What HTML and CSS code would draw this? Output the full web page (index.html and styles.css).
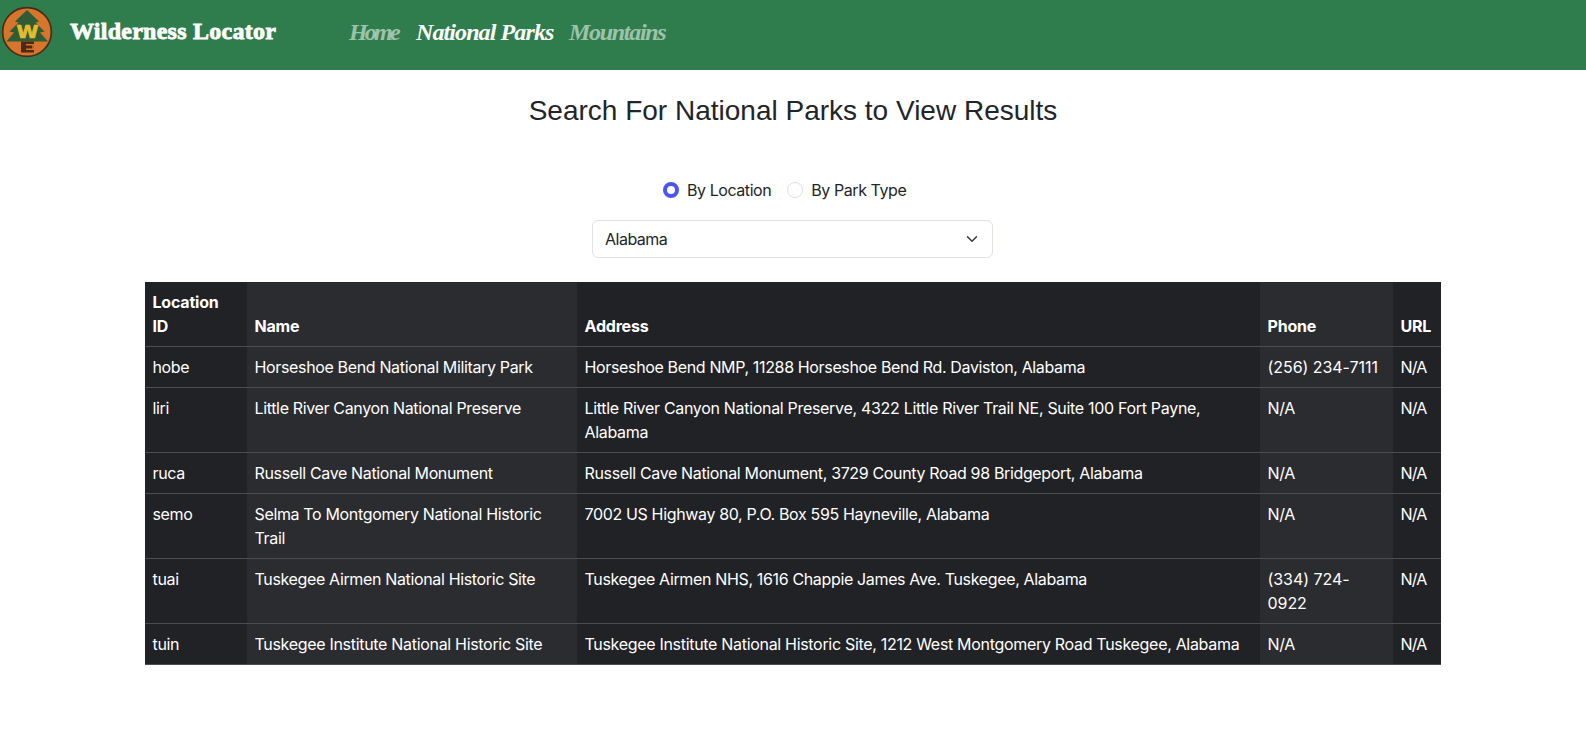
FILE: index.html
```html
<!DOCTYPE html>
<html lang="en">
<head>
<meta charset="utf-8">
<title>Wilderness Locator</title>
<link rel="stylesheet" href="styles.css">
</head>
<body>
<nav class="navbar">
  <svg class="logo" viewBox="0 0 52 52" width="52" height="52">
    <circle cx="26" cy="26" r="24.4" fill="#d5762c" stroke="#4b2a17" stroke-width="1.7"/>
    <path d="M26 4 L38 15.500 L34.500 16.500 L43.500 25.500 L39 26.500 L47 35.500 H5.500 L13 26.500 L8.500 25.500 L17.500 16.500 L14 15.500Z" fill="#2f5b35"/>
    <text class="logo-w" x="15.500" y="32" textLength="22" lengthAdjust="spacingAndGlyphs">W</text>
    <rect x="20" y="35.500" width="13" height="11" fill="#4b2a17"/>
    <path d="M25 38.800h8M25 43.200h8M32 38v6" stroke="#d5762c" stroke-width="1.5"/>
  </svg>
  <a class="brand"><span>Wilderness Locator</span></a>
  <div class="links">
    <a class="home">Home</a>
    <a class="parks active">National Parks</a>
    <a class="mountains">Mountains</a>
  </div>
</nav>
<main>
  <h1>Search For National Parks to View Results</h1>
  <form class="search">
    <div class="choices">
      <label><span class="radio checked"></span>By Location</label>
      <label><span class="radio"></span>By Park Type</label>
    </div>
    <div class="select">
      <span>Alabama</span>
      <svg width="16" height="12" viewBox="0 0 16 16"><path d="m2 5 6 6 6-6" fill="none" stroke="#343a40" stroke-width="2" stroke-linecap="round" stroke-linejoin="round"/></svg>
    </div>
  </form>
  <table>
    <colgroup><col class="c-id"><col class="c-name"><col class="c-address"><col class="c-phone"><col class="c-url"></colgroup>
    <thead><tr><th>Location<br>ID</th><th>Name</th><th>Address</th><th>Phone</th><th>URL</th></tr></thead>
    <tbody>
      <tr><td>hobe</td><td>Horseshoe Bend National Military Park</td><td>Horseshoe Bend NMP, 11288 Horseshoe Bend Rd. Daviston, Alabama</td><td class="tel">(256) 234-7111</td><td>N/A</td></tr>
      <tr><td>liri</td><td>Little River Canyon National Preserve</td><td class="long">Little River Canyon National Preserve, 4322 Little River Trail NE, Suite 100 Fort Payne,<br>Alabama</td><td>N/A</td><td>N/A</td></tr>
      <tr><td>ruca</td><td>Russell Cave National Monument</td><td>Russell Cave National Monument, 3729 County Road 98 Bridgeport, Alabama</td><td>N/A</td><td>N/A</td></tr>
      <tr><td>semo</td><td>Selma To Montgomery National Historic<br>Trail</td><td>7002 US Highway 80, P.O. Box 595 Hayneville, Alabama</td><td>N/A</td><td>N/A</td></tr>
      <tr><td>tuai</td><td>Tuskegee Airmen National Historic Site</td><td>Tuskegee Airmen NHS, 1616 Chappie James Ave. Tuskegee, Alabama</td><td class="tel">(334) 724-<br>0922</td><td>N/A</td></tr>
      <tr><td>tuin</td><td class="long">Tuskegee Institute National Historic Site</td><td class="long">Tuskegee Institute National Historic Site, 1212 West Montgomery Road Tuskegee, Alabama</td><td>N/A</td><td>N/A</td></tr>
    </tbody>
  </table>
</main>
</body>
</html>
```
FILE: styles.css
```css
* { box-sizing: border-box; }
body {
  margin: 0;
  background: #fff;
  color: #212529;
  font: 16px/24px Inter, "Liberation Sans", sans-serif;
  letter-spacing: -0.35px;
}
.navbar {
  display: flex;
  height: 70px;
  padding: 6px 0 0 1px;
  background: #2f7d4d;
  color: #fff;
}
.logo { flex: none; }
.logo-w { font: bold 17px "DejaVu Sans", sans-serif; fill: #e3bb2e; stroke: #e3bb2e; stroke-width: 0.7px; letter-spacing: 0; }
.brand {
  width: 279px;
  margin: 7px 0 0 17px;
  font: bold 24px/36px "Liberation Serif", serif;
  letter-spacing: 0.25px;
  -webkit-text-stroke: 0.8px #fff;
  white-space: nowrap;
}
.links {
  display: flex;
  padding-top: 8px;
  font: italic bold 24px/36px "Liberation Serif", serif;
  color: rgba(255, 255, 255, 0.55);
  white-space: nowrap;
}
.home { width: 67px; letter-spacing: -2.8px; }
.parks { width: 153px; letter-spacing: -0.9px; }
.mountains { letter-spacing: -1.3px; }
.active { color: #fff; }
main { display: flex; flex-direction: column; align-items: center; }
h1 {
  margin: 24px 0 0;
  font: 28px/34px "Liberation Sans", Arial, sans-serif;
  letter-spacing: 0;
}
.search { width: 401px; margin: 50px 1px 0 0; }
.choices { display: flex; gap: 16px; padding-left: 71px; }
.choices label { display: flex; align-items: center; letter-spacing: -0.43px; white-space: nowrap; }
.radio {
  flex: none;
  width: 16px;
  height: 16px;
  margin-right: 8px;
  border: 1px solid #dee2e6;
  border-radius: 50%;
  background: #fff;
}
.radio.checked { border: 4.5px solid #4b54f6; }
.select {
  display: flex;
  align-items: center;
  justify-content: space-between;
  height: 38px;
  margin-top: 18px;
  padding: 0 12px;
  border: 1px solid #dee2e6;
  border-radius: 6px;
  letter-spacing: -0.5px;
}
table {
  width: 1296px;
  margin-top: 24px;
  border-spacing: 0;
  table-layout: fixed;
  background: #212226;
  color: #fff;
}
.c-id { width: 102px; }
.c-name { width: 330px; }
.c-address { width: 683px; }
.c-phone { width: 133px; }
.c-url { width: 48px; }
th, td {
  padding: 8px 8px 8px 7.5px;
  border-bottom: 1px solid #4a4c50;
  text-align: left;
  vertical-align: top;
}
td { white-space: nowrap; }
th { vertical-align: bottom; letter-spacing: -0.2px; }
th:nth-child(even), td:nth-child(even) { background: #2b2c30; }
.long { letter-spacing: -0.31px; }
.tel { letter-spacing: -0.05px; }
td:last-child { letter-spacing: -0.8px; }
```
